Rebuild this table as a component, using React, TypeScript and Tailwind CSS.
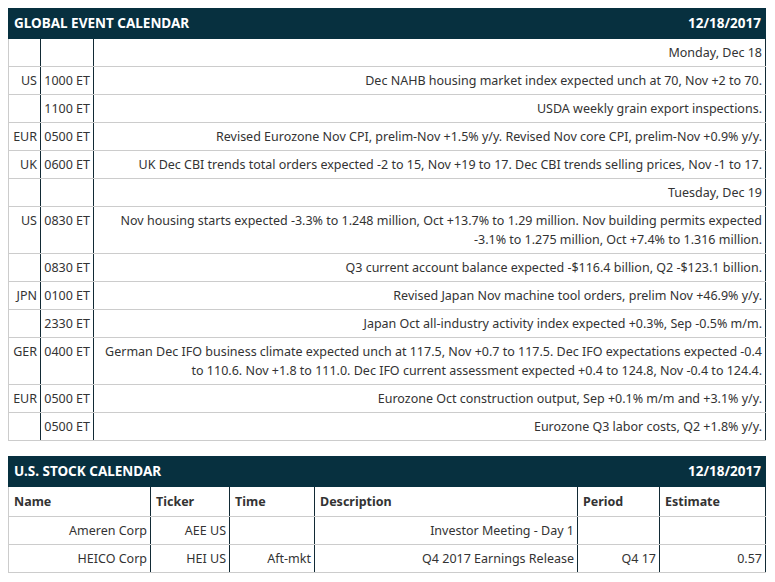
import React from "react";

type EventRow =
  | { kind: "day"; label: string }
  | { kind: "event"; region?: string; time: string; text: React.ReactNode };

const events: EventRow[] = [
  { kind: "day", label: "Monday, Dec 18" },
  { kind: "event", region: "US", time: "1000 ET", text: "Dec NAHB housing market index expected unch at 70, Nov +2 to 70." },
  { kind: "event", time: "1100 ET", text: "USDA weekly grain export inspections." },
  { kind: "event", region: "EUR", time: "0500 ET", text: "Revised Eurozone Nov CPI, prelim-Nov +1.5% y/y. Revised Nov core CPI, prelim-Nov +0.9% y/y." },
  { kind: "event", region: "UK", time: "0600 ET", text: "UK Dec CBI trends total orders expected -2 to 15, Nov +19 to 17. Dec CBI trends selling prices, Nov -1 to 17." },
  { kind: "day", label: "Tuesday, Dec 19" },
  {
    kind: "event",
    region: "US",
    time: "0830 ET",
    text: (
      <>
        Nov housing starts expected -3.3% to 1.248 million, Oct +13.7% to 1.29 million. Nov building permits expected
        <br />
        -3.1% to 1.275 million, Oct +7.4% to 1.316 million.
      </>
    ),
  },
  { kind: "event", time: "0830 ET", text: "Q3 current account balance expected -$116.4 billion, Q2 -$123.1 billion." },
  { kind: "event", region: "JPN", time: "0100 ET", text: "Revised Japan Nov machine tool orders, prelim Nov +46.9% y/y." },
  { kind: "event", time: "2330 ET", text: "Japan Oct all-industry activity index expected +0.3%, Sep -0.5% m/m." },
  {
    kind: "event",
    region: "GER",
    time: "0400 ET",
    text: (
      <>
        German Dec IFO business climate expected unch at 117.5, Nov +0.7 to 117.5. Dec IFO expectations expected -0.4
        <br />
        to 110.6. Nov +1.8 to 111.0. Dec IFO current assessment expected +0.4 to 124.8, Nov -0.4 to 124.4.
      </>
    ),
  },
  { kind: "event", region: "EUR", time: "0500 ET", text: "Eurozone Oct construction output, Sep +0.1% m/m and +3.1% y/y." },
  { kind: "event", time: "0500 ET", text: "Eurozone Q3 labor costs, Q2 +1.8% y/y." },
];

const stocks = [
  { name: "Ameren Corp", ticker: "AEE US", time: "", desc: "Investor Meeting - Day 1", period: "", estimate: "" },
  { name: "HEICO Corp", ticker: "HEI US", time: "Aft-mkt", desc: "Q4 2017 Earnings Release", period: "Q4 17", estimate: "0.57" },
];

// shared cell styles
const cell = "border-b border-r border-b-[#cccccc] border-r-[#122a35] px-[3px] py-1 text-right align-top";

function PanelHeader({ title, date }: { title: string; date: string }) {
  return (
    <div className="flex h-[31px] items-center justify-between bg-[#07303f] pl-[6px] pr-[5px] text-[13.5px] font-bold text-white">
      <span>{title}</span>
      <span>{date}</span>
    </div>
  );
}

function EventCalendar() {
  return (
    <div>
      <PanelHeader title="GLOBAL EVENT CALENDAR" date="12/18/2017" />
      <table className="w-full table-fixed border-collapse border-l border-l-[#cccccc]">
        <colgroup>
          <col className="w-[32px]" />
          <col className="w-[53px]" />
          <col />
        </colgroup>
        <tbody>
          {events.map((row, i) =>
            row.kind === "day" ? (
              <tr key={i}>
                <td className={cell}></td>
                <td className={cell}></td>
                <td className={cell}>{row.label}</td>
              </tr>
            ) : (
              <tr key={i}>
                <td className={cell}>{row.region}</td>
                <td className={cell}>{row.time}</td>
                <td className={cell}>{row.text}</td>
              </tr>
            )
          )}
        </tbody>
      </table>
    </div>
  );
}

function StockCalendar() {
  const heads = ["Name", "Ticker", "Time", "Description", "Period", "Estimate"];
  return (
    <div>
      <PanelHeader title="U.S. STOCK CALENDAR" date="12/18/2017" />
      <table className="w-full table-fixed border-collapse border-l border-l-[#cccccc]">
        <colgroup>
          <col className="w-[142px]" />
          <col className="w-[79px]" />
          <col className="w-[85px]" />
          <col className="w-[263px]" />
          <col className="w-[82px]" />
          <col />
        </colgroup>
        <thead>
          <tr>
            {heads.map((h) => (
              <th
                key={h}
                className="border-b border-r border-b-[#cccccc] border-r-[#122a35] px-[5px] pt-[6px] pb-[5px] text-left font-bold leading-[18px]"
              >
                {h}
              </th>
            ))}
          </tr>
        </thead>
        <tbody>
          {stocks.map((s) => (
            <tr key={s.ticker}>
              <td className={cell}>{s.name}</td>
              <td className={cell}>{s.ticker}</td>
              <td className={cell}>{s.time}</td>
              <td className={cell}>{s.desc}</td>
              <td className={cell}>{s.period}</td>
              <td className={cell}>{s.estimate}</td>
            </tr>
          ))}
        </tbody>
      </table>
    </div>
  );
}

export default function App() {
  return (
    <div
      className="min-h-screen bg-white p-2 pr-[9px] text-[12.5px] leading-[19px] text-[#333333]"
      style={{ fontFamily: '"Noto Sans", "Open Sans", sans-serif' }}
    >
      <EventCalendar />
      <div className="mt-[15px]">
        <StockCalendar />
      </div>
    </div>
  );
}
